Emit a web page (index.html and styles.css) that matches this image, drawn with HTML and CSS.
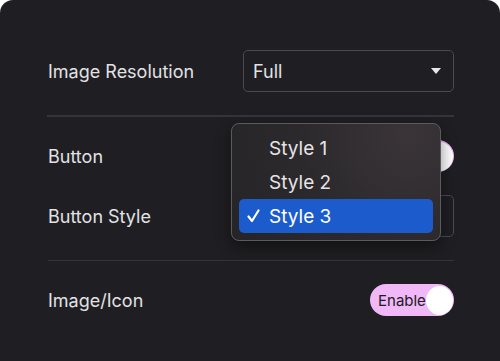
FILE: index.html
```html
<!DOCTYPE html>
<html lang="en">
<head>
  <meta charset="UTF-8">
  <meta name="viewport" content="width=device-width, initial-scale=1.0">
  <title>Button Settings</title>
  <link rel="stylesheet" href="styles.css">
</head>
<body>
  <div class="panel">

    <!-- Resolution -->
    <div class="section first">
      <div class="row">
        <span class="label">Image Resolution</span>
        <div class="select">
          <span>Full</span>
          <span class="caret"></span>
        </div>
      </div>
    </div>

    <!-- Button -->
    <div class="section">
      <div class="row">
        <span class="label">Button</span>
        <div class="toggle">
          <span>Enable</span>
          <span class="knob"></span>
        </div>
      </div>
      <div class="row style-row">
        <span class="label">Button Style</span>
        <div class="select">
          <span>Style 3</span>
          <span class="caret"></span>
        </div>

        <!-- open menu -->
        <ul class="menu">
          <li><span class="check"></span>Style 1</li>
          <li><span class="check"></span>Style 2</li>
          <li class="selected">
            <span class="check">
              <svg width="13" height="14" viewBox="0 0 13 14"><polyline points="1.5,7.5 5,12 11.5,1.5" fill="none" stroke="#ffffff" stroke-width="2.2" stroke-linecap="round" stroke-linejoin="round"/></svg>
            </span>Style 3
          </li>
        </ul>
      </div>
    </div>

    <!-- Image / Icon -->
    <div class="section last">
      <div class="row">
        <span class="label">Image/Icon</span>
        <div class="toggle">
          <span>Enable</span>
          <span class="knob"></span>
        </div>
      </div>
    </div>

  </div>
</body>
</html>
```

FILE: styles.css
```css
html, body {
  margin: 0;
  background: #ffffff;
}
body {
  font-family: Inter, "Noto Sans", sans-serif;
  font-size: 18px;
  color: #e2e2e4;
}
.panel {
  width: 500px;
  height: 361px;
  box-sizing: border-box;
  background: #1f1f23;
  border-radius: 13px 13px 0 0;
  padding: 50px 46px 0 48px;
}
.section {
  padding: 23px 0;
  border-bottom: 1px solid #34343a;
  display: flex;
  flex-direction: column;
  gap: 23px;
}
.section.first {
  padding-top: 0;
  border-bottom: 2px solid #34343a;
  margin-left: -1px;
  padding-left: 1px;
}
.section.last {
  border-bottom: none;
}
.row {
  display: flex;
  align-items: center;
  justify-content: space-between;
}
.style-row {
  position: relative;
}
.select {
  width: 211px;
  height: 42px;
  box-sizing: border-box;
  border: 1px solid #4a4a50;
  border-radius: 5px;
  display: flex;
  align-items: center;
  justify-content: space-between;
  padding: 0 12px 0 9px;
}
.caret {
  width: 0;
  height: 0;
  border-left: 5px solid transparent;
  border-right: 5px solid transparent;
  border-top: 6px solid #e8e8ea;
}
.toggle {
  width: 84px;
  height: 32px;
  box-sizing: border-box;
  border-radius: 16px;
  background: #f0b8f6;
  color: #201a22;
  display: flex;
  align-items: center;
  justify-content: space-between;
  padding: 0 1px 0 8px;
  font-size: 15px;
}
.knob {
  width: 29px;
  height: 29px;
  border-radius: 50%;
  background: #ffffff;
}
.menu {
  position: absolute;
  left: 183px;
  top: -72px;
  width: 210px;
  height: 118px;
  box-sizing: border-box;
  margin: 0;
  padding: 7px 7px 8px;
  list-style: none;
  background: radial-gradient(circle at 85% 10%, #3a3438 0%, #2b292c 55%, #252427 100%);
  border: 1px solid #5c5a5f;
  border-radius: 8px;
  box-shadow: 0 6px 16px rgba(0, 0, 0, 0.45);
  font-size: 19px;
  color: #e6e4e6;
}
.menu li {
  height: 34px;
  display: flex;
  align-items: center;
  padding-left: 8px;
  border-radius: 5px;
}
.menu li.selected {
  background: #1c5bcc;
  color: #ffffff;
}
.check {
  width: 22px;
  display: flex;
  align-items: center;
}
```
